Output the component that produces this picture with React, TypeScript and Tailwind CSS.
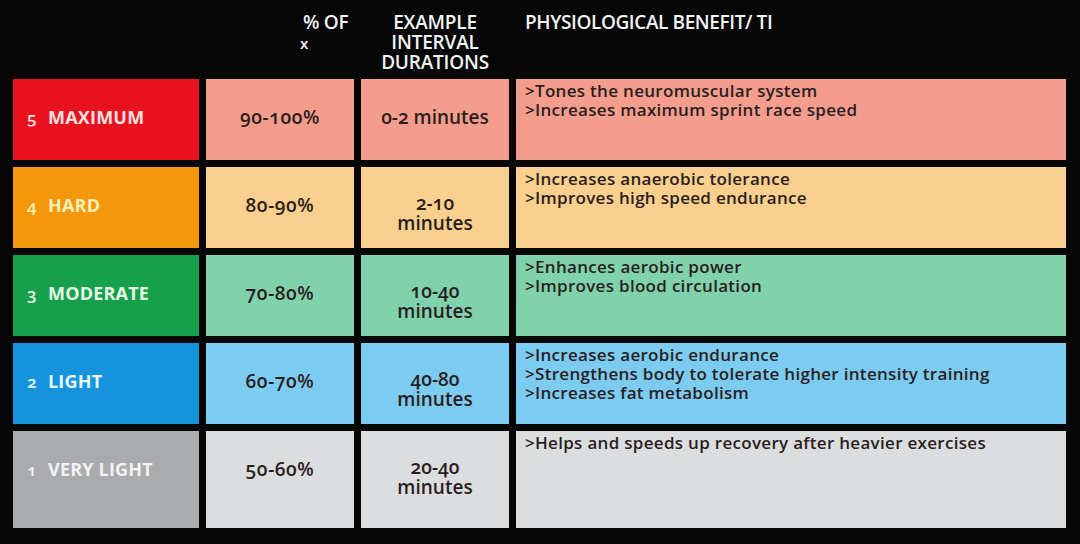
import React from 'react';

interface Zone {
  num: string;
  name: string;
  pct: string;
  dur: string[];
  benefits: string[];
  strong: string;
  light: string;
  labelColor: string;
  tall?: boolean;
}

const zones: Zone[] = [
  {
    num: '5',
    name: 'MAXIMUM',
    pct: '90-100%',
    dur: ['0-2 minutes'],
    benefits: ['Tones the neuromuscular system', 'Increases maximum sprint race speed'],
    strong: 'bg-[#e8111e]',
    light: 'bg-[#f59d8d]',
    labelColor: 'text-[#fbe0e0]',
  },
  {
    num: '4',
    name: 'HARD',
    pct: '80-90%',
    dur: ['2-10', 'minutes'],
    benefits: ['Increases anaerobic tolerance', 'Improves high speed endurance'],
    strong: 'bg-[#f5970a]',
    light: 'bg-[#fbcf8d]',
    labelColor: 'text-[#fdf0b8]',
  },
  {
    num: '3',
    name: 'MODERATE',
    pct: '70-80%',
    dur: ['10-40', 'minutes'],
    benefits: ['Enhances aerobic power', 'Improves blood circulation'],
    strong: 'bg-[#16a04c]',
    light: 'bg-[#80d2ad]',
    labelColor: 'text-[#e6f8e6]',
  },
  {
    num: '2',
    name: 'LIGHT',
    pct: '60-70%',
    dur: ['40-80', 'minutes'],
    benefits: [
      'Increases aerobic endurance',
      'Strengthens body to tolerate higher intensity training',
      'Increases fat metabolism',
    ],
    strong: 'bg-[#1593dc]',
    light: 'bg-[#7ccbf1]',
    labelColor: 'text-[#e8f6ff]',
  },
  {
    num: '1',
    name: 'VERY LIGHT',
    pct: '50-60%',
    dur: ['20-40', 'minutes'],
    benefits: ['Helps and speeds up recovery after heavier exercises'],
    strong: 'bg-[#a9abae]',
    light: 'bg-[#dcdddf]',
    labelColor: 'text-[#f2f2f2]',
    tall: true,
  },
];

const grid = 'grid grid-cols-[186px_148px_148px_550px] gap-x-[7px]';

export default function App() {
  return (
    <div
      className="w-[1080px] h-[544px] bg-[#060606] overflow-hidden pl-[13px] oldstyle-nums"
      style={{ fontFamily: '"Open Sans", "Noto Sans", sans-serif' }}
    >
      <div className={`${grid} h-[79px] text-[19px] leading-[20px] font-semibold text-[#f4f4f4]`}>
        <div />
        <div className="flex justify-end pt-[12px]">
          <div className="w-[51px] whitespace-nowrap">
            <div className="tracking-[-0.3px]">% OF</div>
            <div className="text-[15px] -ml-[3px] mt-[1px]">x</div>
          </div>
        </div>
        <div className="pt-[12px] text-center tracking-[-0.2px]">
          <div>EXAMPLE</div>
          <div>INTERVAL</div>
          <div>DURATIONS</div>
        </div>
        <div className="pt-[12px] pl-[9px] tracking-[-0.4px] whitespace-nowrap">PHYSIOLOGICAL BENEFIT/ TI</div>
      </div>

      <div className="flex flex-col gap-y-[7px]">
        {zones.map((z) => (
          <div key={z.num} className={`${grid} ${z.tall ? 'h-[97px]' : 'h-[81px]'}`}>
            <div
              className={`${z.strong} ${z.labelColor} flex items-baseline pt-[28px] pl-[14px] text-[18px] leading-[20px] font-bold tracking-[0.2px]`}
            >
              <span className="w-[21px] text-[17px] font-semibold">{z.num}</span>
              <span className="whitespace-nowrap">{z.name}</span>
            </div>
            <div
              className={`${z.light} pt-[28px] text-center text-[19px] leading-[20px] font-semibold tracking-[0.6px] text-[#2b1d1d]`}
            >
              {z.pct}
            </div>
            <div
              className={`${z.light} ${z.dur.length > 1 ? 'pt-[26px]' : 'pt-[28px]'} text-center text-[19px] leading-[20px] font-semibold text-[#2b1d1d]`}
            >
              {z.dur.map((d) => (
                <div key={d}>{d}</div>
              ))}
            </div>
            <div
              className={`${z.light} pt-[2px] pl-[9px] text-[17px] leading-[19px] font-semibold tracking-[0.3px] text-[#2a1e1e]`}
            >
              {z.benefits.map((b) => (
                <div key={b} className="whitespace-nowrap">
                  &gt;{b}
                </div>
              ))}
            </div>
          </div>
        ))}
      </div>
    </div>
  );
}
